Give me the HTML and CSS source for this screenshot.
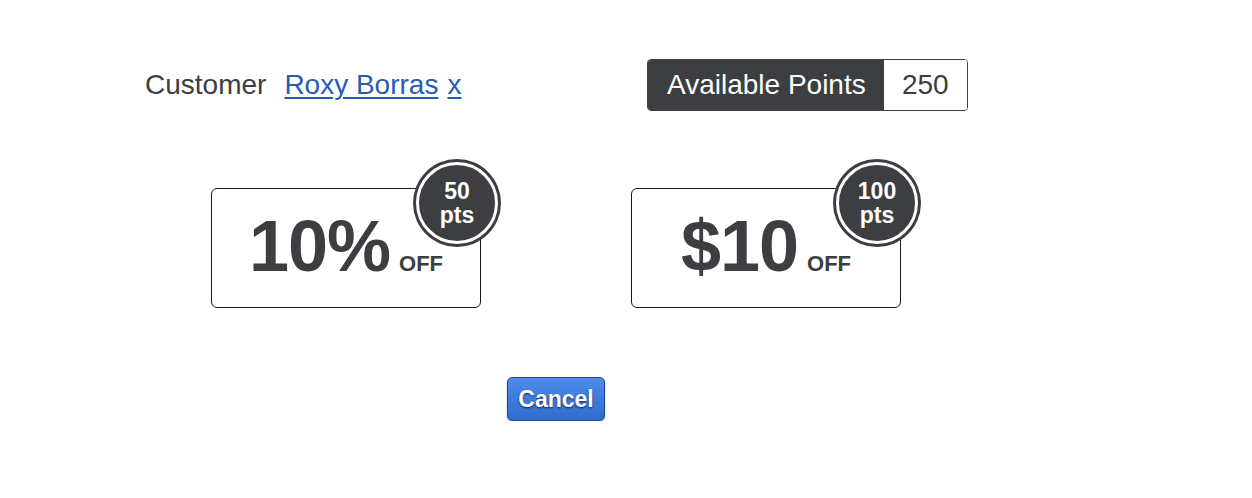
FILE: index.html
```html
<!DOCTYPE html>
<html>
<head>
<meta charset="utf-8">
<link rel="stylesheet" href="styles.css">
</head>
<body>
<div class="page">
  <div class="top">
    <div class="customer">
      <span class="label">Customer</span>
      <a class="name" href="#">Roxy Borras</a>
      <a class="remove" href="#">x</a>
    </div>
    <div class="points">
      <span class="points-label">Available Points</span>
      <span class="points-value">250</span>
    </div>
  </div>
  <div class="coupons">
    <div class="coupon">
      <span class="amount">10%</span><span class="off">OFF</span>
      <div class="badge"><span>50</span><span>pts</span></div>
    </div>
    <div class="coupon">
      <span class="amount">$10</span><span class="off">OFF</span>
      <div class="badge"><span>100</span><span>pts</span></div>
    </div>
  </div>
  <div class="actions">
    <button class="cancel">Cancel</button>
  </div>
</div>
</body>
</html>
```

FILE: styles.css
```css
html, body {
  margin: 0;
  padding: 0;
  background: #ffffff;
}
body {
  font-family: "Liberation Sans", Arial, sans-serif;
  color: #3d3e42;
}
.page {
  padding: 59px 0 0 145px;
}
.top {
  display: flex;
  align-items: center;
  height: 52px;
}
.customer {
  width: 502px;
  font-size: 28px;
  display: flex;
  align-items: baseline;
}
.customer .label {
  margin-right: 18px;
}
.customer a {
  color: #2a5bb3;
  text-decoration: underline;
  text-decoration-thickness: 2px;
  text-underline-offset: 3px;
}
.customer .remove {
  margin-left: 9px;
}
.points {
  display: flex;
  height: 52px;
  box-sizing: border-box;
  border: 1px solid #3d3e42;
  border-radius: 4px;
  overflow: hidden;
  font-size: 28px;
}
.points-label {
  background: #3d3e42;
  color: #ffffff;
  padding: 0 18px 0 19px;
  display: flex;
  align-items: center;
}
.points-value {
  background: #ffffff;
  display: flex;
  align-items: center;
  width: 83px;
  box-sizing: border-box;
  justify-content: center;
}
.coupons {
  display: flex;
  gap: 150px;
  margin-top: 77px;
  margin-left: 66px;
}
.coupon {
  position: relative;
  width: 270px;
  height: 120px;
  box-sizing: border-box;
  border: 1px solid #1a1a1a;
  border-radius: 6px;
  display: flex;
  align-items: baseline;
  justify-content: center;
  padding-top: 12px;
  font-weight: bold;
  color: #3d3e42;
}
.amount {
  font-size: 72px;
  line-height: 90px;
  letter-spacing: -1px;
}
.off {
  font-size: 22px;
  margin-left: 9px;
}
.badge {
  position: absolute;
  top: -27px;
  right: -18px;
  width: 76px;
  height: 76px;
  border: 3px solid #ffffff;
  border-radius: 50%;
  background: #3d3e42;
  box-shadow: 0 0 0 3px #3d3e42;
  color: #ffffff;
  font-size: 23px;
  line-height: 24px;
  display: flex;
  flex-direction: column;
  align-items: center;
  justify-content: center;
}
.actions {
  margin-top: 69px;
  margin-left: 362px;
}
.cancel {
  width: 98px;
  height: 44px;
  padding: 0;
  border: 1px solid #1d4a92;
  border-radius: 5px;
  background: linear-gradient(#4d8ce8, #2f6cd0);
  color: #ffffff;
  font-family: "Liberation Sans", Arial, sans-serif;
  font-weight: bold;
  font-size: 23px;
  text-shadow: 0 1px 2px rgba(0, 0, 0, 0.7);
  box-shadow: 0 1px 2px rgba(0, 0, 0, 0.3);
}
```
